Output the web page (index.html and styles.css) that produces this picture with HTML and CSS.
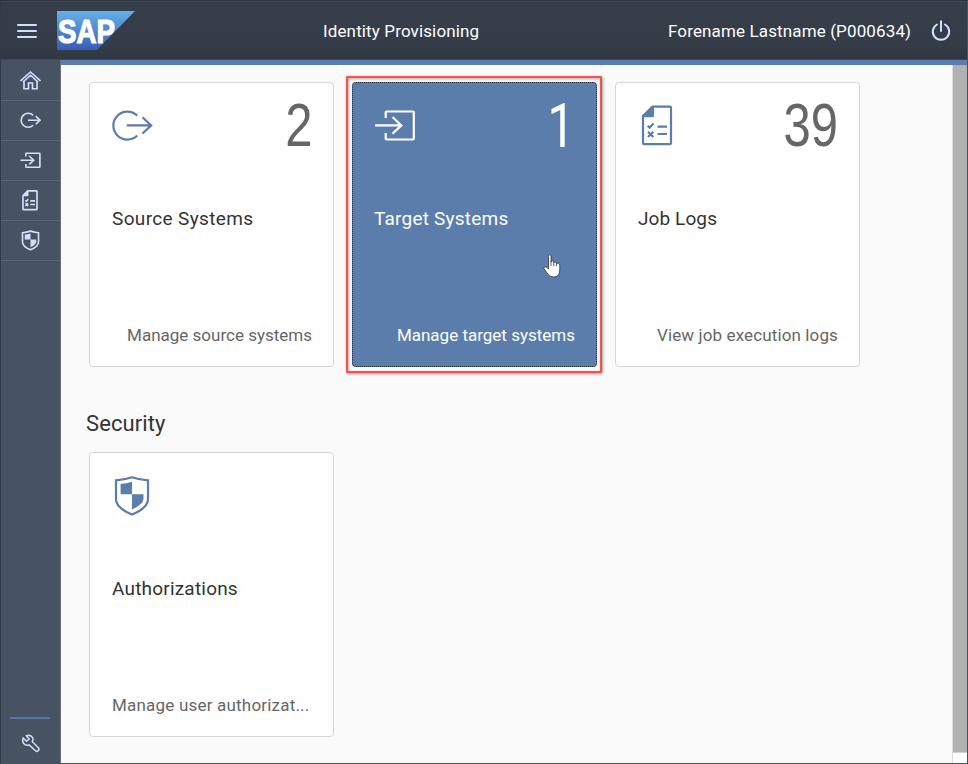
FILE: index.html
```html
<!DOCTYPE html>
<html lang="en">
<head>
<meta charset="utf-8">
<title>Identity Provisioning</title>
<link rel="stylesheet" href="styles.css">
</head>
<body>
<svg class="sprite" aria-hidden="true">
  <symbol id="source" viewBox="0 0 42 42"><path d="M26.2 10.6A14 14 0 1 0 26.2 30.5M15.8 20.4H40M31.5 12.3L40.2 20.4L31.5 28.5"/></symbol>
  <symbol id="target" viewBox="0 0 42 42"><path d="M1 20.4H27M18.5 12L27.3 20.4L18.5 28.8M11.7 13V7.5Q11.7 6.5 12.7 6.5H38.8Q39.8 6.5 39.8 7.5V33.5Q39.8 34.5 38.8 34.5H12.7Q11.7 34.5 11.7 33.5V28"/></symbol>
  <symbol id="log" viewBox="0 0 42 42"><path d="M6 11V38Q6 39.2 7.2 39.2H32.8Q34 39.2 34 38V2.8Q34 1.6 32.8 1.6H15.5L6 11ZM20.5 21.6H30M20.5 29H30M10.8 20.8L12.6 22.7L16.5 18.5M11 26.8L16.3 32M16.3 26.8L11 32"/><path class="solid" d="M6 11L15.5 1.6H17V11Q17 12.3 15.8 12.3H6Z"/></symbol>
  <symbol id="shield" viewBox="0 0 42 42"><path d="M21 2.3Q29 5 37 5.4V24Q37 33 21 39.5Q5 33 5 24V5.4Q13 5 21 2.3Z"/><path class="solid" d="M21 6.8V19.2H9.6V9Q15.5 8.6 21 6.8ZM21 19.2H32.5V24Q32.5 29 21 34.6Z"/></symbol>
  <symbol id="home" viewBox="0 0 42 42"><path d="M1 22L21 4L41 22M8 21V37.5H17V26H25V37.5H34V21M6 24L21 10.5L36 24"/></symbol>
  <symbol id="wrench" viewBox="0 0 42 42"><path d="M5 9L12 16L18 11L12 4Q20 1 25 7Q28 11 25 17L39 31Q41 34 38 37Q35 40 32 37L18 24Q11 27 6 21Q2 16 5 9Z"/></symbol>
</svg>
<div class="window">
  <header class="topbar">
    <button class="menu" aria-label="Menu"><i></i><i></i><i></i></button>
    <svg class="logo" viewBox="0 0 78 39">
      <defs><linearGradient id="sky" x1="0" y1="0" x2="0" y2="1"><stop offset="0" stop-color="#65b1e9"/><stop offset="1" stop-color="#3b5bb8"/></linearGradient></defs>
      <path d="M0 0H78L40 39H0Z" fill="url(#sky)" stroke="none"/>
      <text x="1" y="31.5" textLength="57" lengthAdjust="spacingAndGlyphs">SAP</text>
    </svg>
    <h1 class="app-title"><span class="t-app">Identity Provisioning</span></h1>
    <span class="user t-user">Forename Lastname (P000634)</span>
    <svg class="power" viewBox="0 0 20 22"><path d="M6 4.5A8.2 8.2 0 1 0 14 4.5M10 1.2V11"/></svg>
  </header>
  <div class="body">
    <nav class="side">
      <a class="item"><svg><use href="#home"/></svg></a>
      <a class="item"><svg><use href="#source"/></svg></a>
      <a class="item"><svg><use href="#target"/></svg></a>
      <a class="item"><svg><use href="#log"/></svg></a>
      <a class="item"><svg><use href="#shield"/></svg></a>
      <div class="tools"><svg><use href="#wrench"/></svg></div>
    </nav>
    <main class="content">
      <div class="page">
        <section class="tiles">
          <article class="tile">
            <div class="head"><svg><use href="#source"/></svg><span class="count">2</span></div>
            <h3><span class="t-source">Source Systems</span></h3>
            <p><span class="t-msource">Manage source systems</span></p>
          </article>
          <article class="tile active">
            <div class="head"><svg><use href="#target"/></svg><span class="count one">1</span></div>
            <h3><span class="t-target">Target Systems</span></h3>
            <p><span class="t-mtarget">Manage target systems</span></p>
            <svg class="cursor" viewBox="0 0 18 24"><path d="M5.5 14V2.2Q5.5 .8 6.7 .8Q8 .8 8 2.2V8Q8.3 6.5 9.7 6.8Q10.8 7 10.8 8.3Q12.8 7 13.5 9.2Q16.5 8.2 16.8 11V16Q16.8 23 10.5 23Q6.3 23 4 19L1 14.5Q.5 12.8 2 12.7Q3.5 12.8 5.5 15Z"/><path class="creases" d="M8 7.5V12M10.8 8V12M13.6 9V12"/></svg>
          </article>
          <article class="tile">
            <div class="head"><svg><use href="#log"/></svg><span class="count">39</span></div>
            <h3><span class="t-jobs">Job Logs</span></h3>
            <p><span class="t-view">View job execution logs</span></p>
          </article>
        </section>
        <h2><span class="t-security">Security</span></h2>
        <section class="tiles">
          <article class="tile">
            <div class="head"><svg><use href="#shield"/></svg></div>
            <h3><span class="t-auth">Authorizations</span></h3>
            <p><span class="t-mauth">Manage user authorizat...</span></p>
          </article>
        </section>
      </div>
      <div class="scroll"><div class="thumb"></div></div>
    </main>
  </div>
</div>
</body>
</html>
```

FILE: styles.css
```css
* { box-sizing: border-box; }
body { margin: 0; font-family: Roboto, "Liberation Sans", sans-serif; color: #333; }
h1, h2, h3, p { margin: 0; font-weight: 400; white-space: nowrap; }
svg { fill: none; stroke: currentColor; display: block; flex: none; }
.sprite { position: absolute; width: 0; height: 0; }
.solid { fill: currentColor; stroke: none; }
.window { width: 968px; height: 764px; display: flex; flex-direction: column; border: 1px solid #4d5158; border-top-color: #2d333d; border-left-color: #323b48; overflow: hidden; }
.topbar { height: 59px; flex: none; display: flex; align-items: center; background: linear-gradient(#363e4a, #343c48 80%, #303743); border-top: 1px solid #3f4956; border-bottom: 1px solid #3c4756; color: #fff; font-size: 17px; }
.menu { width: 20px; margin-left: 16px; padding: 0; border: 0; background: none; display: grid; gap: 4px; }
.menu i { height: 2px; background: #d1e0fa; border-radius: 1px; }
.logo { width: 78px; height: 39px; margin-left: 20px; }
.logo text { fill: #fff; stroke: #fff; stroke-width: 1.2; font: bold 34px "Liberation Sans", sans-serif; }
.app-title { margin-left: 188px; width: 345px; font-size: 17px; letter-spacing: .13px; }
.user { width: 244px; white-space: nowrap; letter-spacing: .13px; }
.power { width: 20px; height: 22px; margin-left: 19px; color: #d1e0fa; stroke-width: 2; stroke-linecap: round; }
.body { flex: 1; display: flex; min-height: 0; }
.side { width: 60px; flex: none; background: #475262; color: #d1e0fa; display: flex; flex-direction: column; border-right: 1px solid #667080; }
.item { height: 40px; display: grid; place-items: center; border-bottom: 1px solid #556479; }
.item:first-child { height: 41px; }
.side svg { width: 21px; height: 21px; stroke-width: 3.3; }
.tools { margin: auto 10px 0 9px; height: 46px; border-top: 2px solid #5078b0; display: flex; justify-content: center; padding-top: 15px; }
.tools svg { width: 19px; height: 19px; }
.content { flex: 1; display: flex; background: #fafafa; border-top: 5px solid #5b7dae; min-width: 0; }
.page { flex: 1; padding: 17px 0 0 28px; min-width: 0; }
.tiles { display: flex; gap: 18px; }
.tile { width: 245px; height: 285px; border: 1px solid #d6d6d6; border-radius: 4px; background: #fff; padding: 22px 21px 0; display: flex; flex-direction: column; position: relative; }
.head { display: flex; justify-content: space-between; height: 98px; color: #5b7dac; }
.head svg { width: 42px; height: 42px; stroke-width: 2.2; }
.count { height: 42px; font-family: "Liberation Sans", sans-serif; font-size: 62px; line-height: 39px; color: #666; transform: scaleX(.79); transform-origin: right; }
.one { font-family: Roboto, sans-serif; font-size: 61px; line-height: 43px; letter-spacing: 1px; }
h3 { font-size: 19px; line-height: 32px; height: 116px; padding-left: 1px; }
.tile p { font-size: 17px; line-height: 32px; color: #666; text-align: right; }
.tiles:last-child p { text-align: left; padding-left: 1px; }
.active { background: #5b7dac; border: 1px dotted #222; color: #fff; }
.active::before { content: ""; position: absolute; inset: -7px -6px -7px -7px; border: 2px solid #f7504f; border-radius: 1px; box-shadow: 1px 1px 3px #999, inset 1px 1px 3px #aaa; }
.active h3 { padding-left: 0; }
.active .head, .active .count, .active p { color: #fff; }
.t-source { letter-spacing: .36px; }
.t-target { letter-spacing: .22px; }
.t-jobs { letter-spacing: .1px; }
.t-auth { letter-spacing: .2px; }
.t-view { letter-spacing: .12px; }
.t-mauth { letter-spacing: .2px; }
.cursor { position: absolute; left: 190px; top: 171px; width: 18px; height: 24px; fill: #fff; stroke: #333; stroke-width: .8; }
.creases { fill: none; }
h2 { font-size: 22px; line-height: 32px; height: 85px; padding: 41px 0 0; margin-left: -3px; letter-spacing: .1px; }
.scroll { width: 15px; background: #fff; border-left: 1px solid #ddd; }
.thumb { height: 688px; background: #b1b1b1; border-bottom: 1px solid #ccc; }
```
